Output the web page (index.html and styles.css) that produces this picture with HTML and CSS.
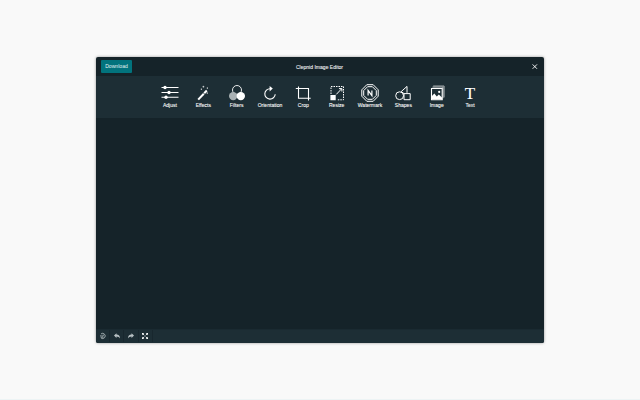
FILE: index.html
```html
<!DOCTYPE html>
<html lang="en">
<head>
<meta charset="utf-8">
<title>Clepnid Image Editor</title>
<link rel="stylesheet" href="styles.css">
</head>
<body>
<main class="editor">
  <header class="header">
    <button class="download">Download</button>
    <h1 class="title">Clepnid Image Editor</h1>
    <button class="close" aria-label="Close"><svg width="6" height="6" viewBox="0 0 6 6"><path d="M.6.4L5 4.8M5 .4L.6 4.8" stroke-width=".9"/></svg></button>
  </header>
  <nav class="tools">
    <button class="tool"><svg viewBox="0 0 18 18"><path d="M.5 3.5h17M.5 8.5h17M.5 13.2h17" stroke-width="1.1"/><g class="solid"><circle cx="4" cy="3.5" r="1.7"/><circle cx="8" cy="8.5" r="1.7"/><circle cx="5" cy="13.2" r="1.7"/></g></svg><span>Adjust</span></button>
    <button class="tool"><svg viewBox="0 0 18 18"><path d="M4.2 15.6l5.6-5.9" stroke-width="2"/><path d="M10.2 9.3l2.6-2.8" stroke-width="2"/><path d="M9.4 1.8v1.8M8.5 2.7h1.8M13.4 3.5v1.2M12.8 4.1H14M7.4 4.6v1.2M6.8 5.2H8M13.3 8.5v1.2M12.7 9.1h1.2" stroke-width=".6"/></svg><span>Effects</span></button>
    <button class="tool"><svg viewBox="0 0 18 18"><circle cx="9" cy="6" r="4.5" stroke-width=".9"/><circle class="gray" cx="5.2" cy="12.1" r="4.2"/><circle class="solid" cx="12.8" cy="12.1" r="4.2"/></svg><span>Filters</span></button>
    <button class="tool"><svg viewBox="0 0 18 18"><path d="M9.2 4.7A5.2 5.2 0 1 0 14.2 10.2" stroke-width="1.1"/><path class="solid" d="M8.6 1.9l3.2 2.7-3.2 2.9z"/></svg><span>Orientation</span></button>
    <button class="tool"><svg viewBox="0 0 18 18"><path d="M4.5 2.5v11.8h12.2M1.8 4.5h12.7v12" stroke-width="1.1"/></svg><span>Crop</span></button>
    <button class="tool"><svg viewBox="0 0 18 18"><path d="M3 10V2.5h12.5v13.3H9" stroke-width="1" stroke-dasharray="1.5 1"/><path class="solid" d="M2.4 11h5.3v5.3H2.4z"/><path d="M8.3 10.4l5.2-5.5M11 4.6h2.9v2.9" stroke-width="1"/></svg><span>Resize</span></button>
    <button class="tool"><svg viewBox="0 0 18 18"><path d="M5.8.7h6.4l5 5.1v6.4l-5 5.1H5.8l-5-5.1V5.8z" stroke-width="1"/><path d="M6.6 2.7h4.8l3.9 3.9v4.8l-3.9 3.9H6.6l-3.9-3.9V6.6z" stroke-width="1"/><path d="M7.1 11.6V6.4l3.8 5.2V6.4" stroke-width="1.2"/></svg><span>Watermark</span></button>
    <button class="tool"><svg viewBox="0 0 18 18"><circle cx="5.6" cy="11.7" r="3.9" stroke-width="1"/><path d="M7.2 7.6l5.8-5.2v6.4M10 9.6h6.2v6.1H10zM7.2 7.6l2.8 2" stroke-width="1"/></svg><span>Shapes</span></button>
    <button class="tool"><svg viewBox="0 0 18 18"><path d="M5.2 2h10.9v11.4" stroke-width=".6"/><path d="M4.4 3.1H15v11.1" stroke-width=".6"/><path d="M3.5 4.5h10.7v11.2H3.5z" stroke-width="1.1"/><path class="solid" d="M3.5 15.6v-3L6.3 9.4l2.5 3.2 2-2 3.4 3.2v1.8z"/><circle class="solid" cx="11.2" cy="7.9" r="1.1"/></svg><span>Image</span></button>
    <button class="tool"><b class="letter">T</b><span>Text</span></button>
  </nav>
  <section class="canvas"></section>
  <footer class="footer">
    <button class="action" aria-label="History"><svg viewBox="0 0 8 8"><path d="M2 1.9A2.6 2.6 0 1 1 2 6M1 3.9h1.8M4.2 2.6v1.5H3.1M1.6 5.2h2.8" stroke-width=".8"/></svg></button>
    <button class="action" aria-label="Undo"><svg viewBox="0 0 8 8"><path class="solid" d="M1 3.5l2.5-2.3v1.4c2.3.1 3.4 1.3 3.6 4C6 5.2 5.2 4.7 3.5 4.6v1.3z"/></svg></button>
    <button class="action" aria-label="Redo"><svg viewBox="0 0 8 8"><path class="solid" d="M7 3.5L4.5 1.2v1.4C2.2 2.7 1.1 3.9.9 6.6 2 5.2 2.8 4.7 4.5 4.6v1.3z"/></svg></button>
    <button class="action bright" aria-label="Fit to screen"><svg viewBox="0 0 8 8"><path class="solid" d="M1 1h2.3L1 3.3zM7 1v2.3L4.7 1zM1 7V4.7L3.3 7zM7 7H4.7L7 4.7z"/><path d="M1.5 1.5l1.8 1.8M6.5 1.5L4.7 3.3M1.5 6.5l1.8-1.8M6.5 6.5L4.7 4.7" stroke-width=".9"/></svg></button>
  </footer>
</main>
</body>
</html>
```
FILE: styles.css
```css
* { box-sizing: border-box; }
body {
  margin: 0;
  height: 400px;
  display: flex;
  justify-content: center;
  align-items: center;
  background: #f9f9f9;
  font-family: "Liberation Sans", Arial, sans-serif;
  color: #fff;
  box-shadow: inset 0 -1px #edf4f5;
}
button {
  margin: 0;
  padding: 0;
  border: 0;
  background: none;
  color: inherit;
  font: inherit;
}
svg { display: block; fill: none; stroke: currentColor; }
.solid { fill: currentColor; stroke: none; }
.gray { fill: #a9b1b4; stroke: none; }
.editor {
  width: 448px;
  height: 286px;
  display: flex;
  flex-direction: column;
  overflow: hidden;
  border-radius: 2px;
  background: #152329;
  box-shadow: 0 0 3px rgba(0, 0, 0, .4);
}
.header {
  height: 19px;
  flex: none;
  display: grid;
  grid-template-columns: 1fr auto 1fr;
  align-items: center;
  padding: 0 6px 0 5px;
}
.download {
  width: 31px;
  height: 13px;
  border-radius: 1px;
  background: #02737d;
  color: #e2f2f3;
  font-size: 5.1px;
  line-height: 13px;
}
.title { margin: 0; font-size: 5.05px; font-weight: 400; line-height: 8px; color: #f2f4f5; -webkit-text-stroke: .08px; }
.close { justify-self: end; }
.tools {
  height: 42px;
  flex: none;
  display: flex;
  justify-content: center;
  background: #1d2e35;
}
.tool {
  width: 33.35px;
  display: flex;
  flex-direction: column;
  align-items: center;
  padding-top: 8px;
}
.tool svg, .letter { width: 18px; height: 18px; }
.tool span { font-size: 5.05px; line-height: 7px; white-space: nowrap; -webkit-text-stroke: .08px; }
.letter { font: 400 17px/20px "Liberation Serif", serif; text-align: center; -webkit-text-stroke: .1px; }
.canvas { flex: 1; }
.footer { height: 14px; flex: none; display: flex; background: #1d2e35; border-top: 1px solid #1a2a31; padding-bottom: 1px; }
.action {
  width: 14.2px;
  display: flex;
  justify-content: center;
  align-items: center;
  border-right: 1px solid #18272e;
  color: #b8c1c4;
}
.action svg { width: 8px; height: 8px; }
.bright { color: #f4f7f7; }
```
